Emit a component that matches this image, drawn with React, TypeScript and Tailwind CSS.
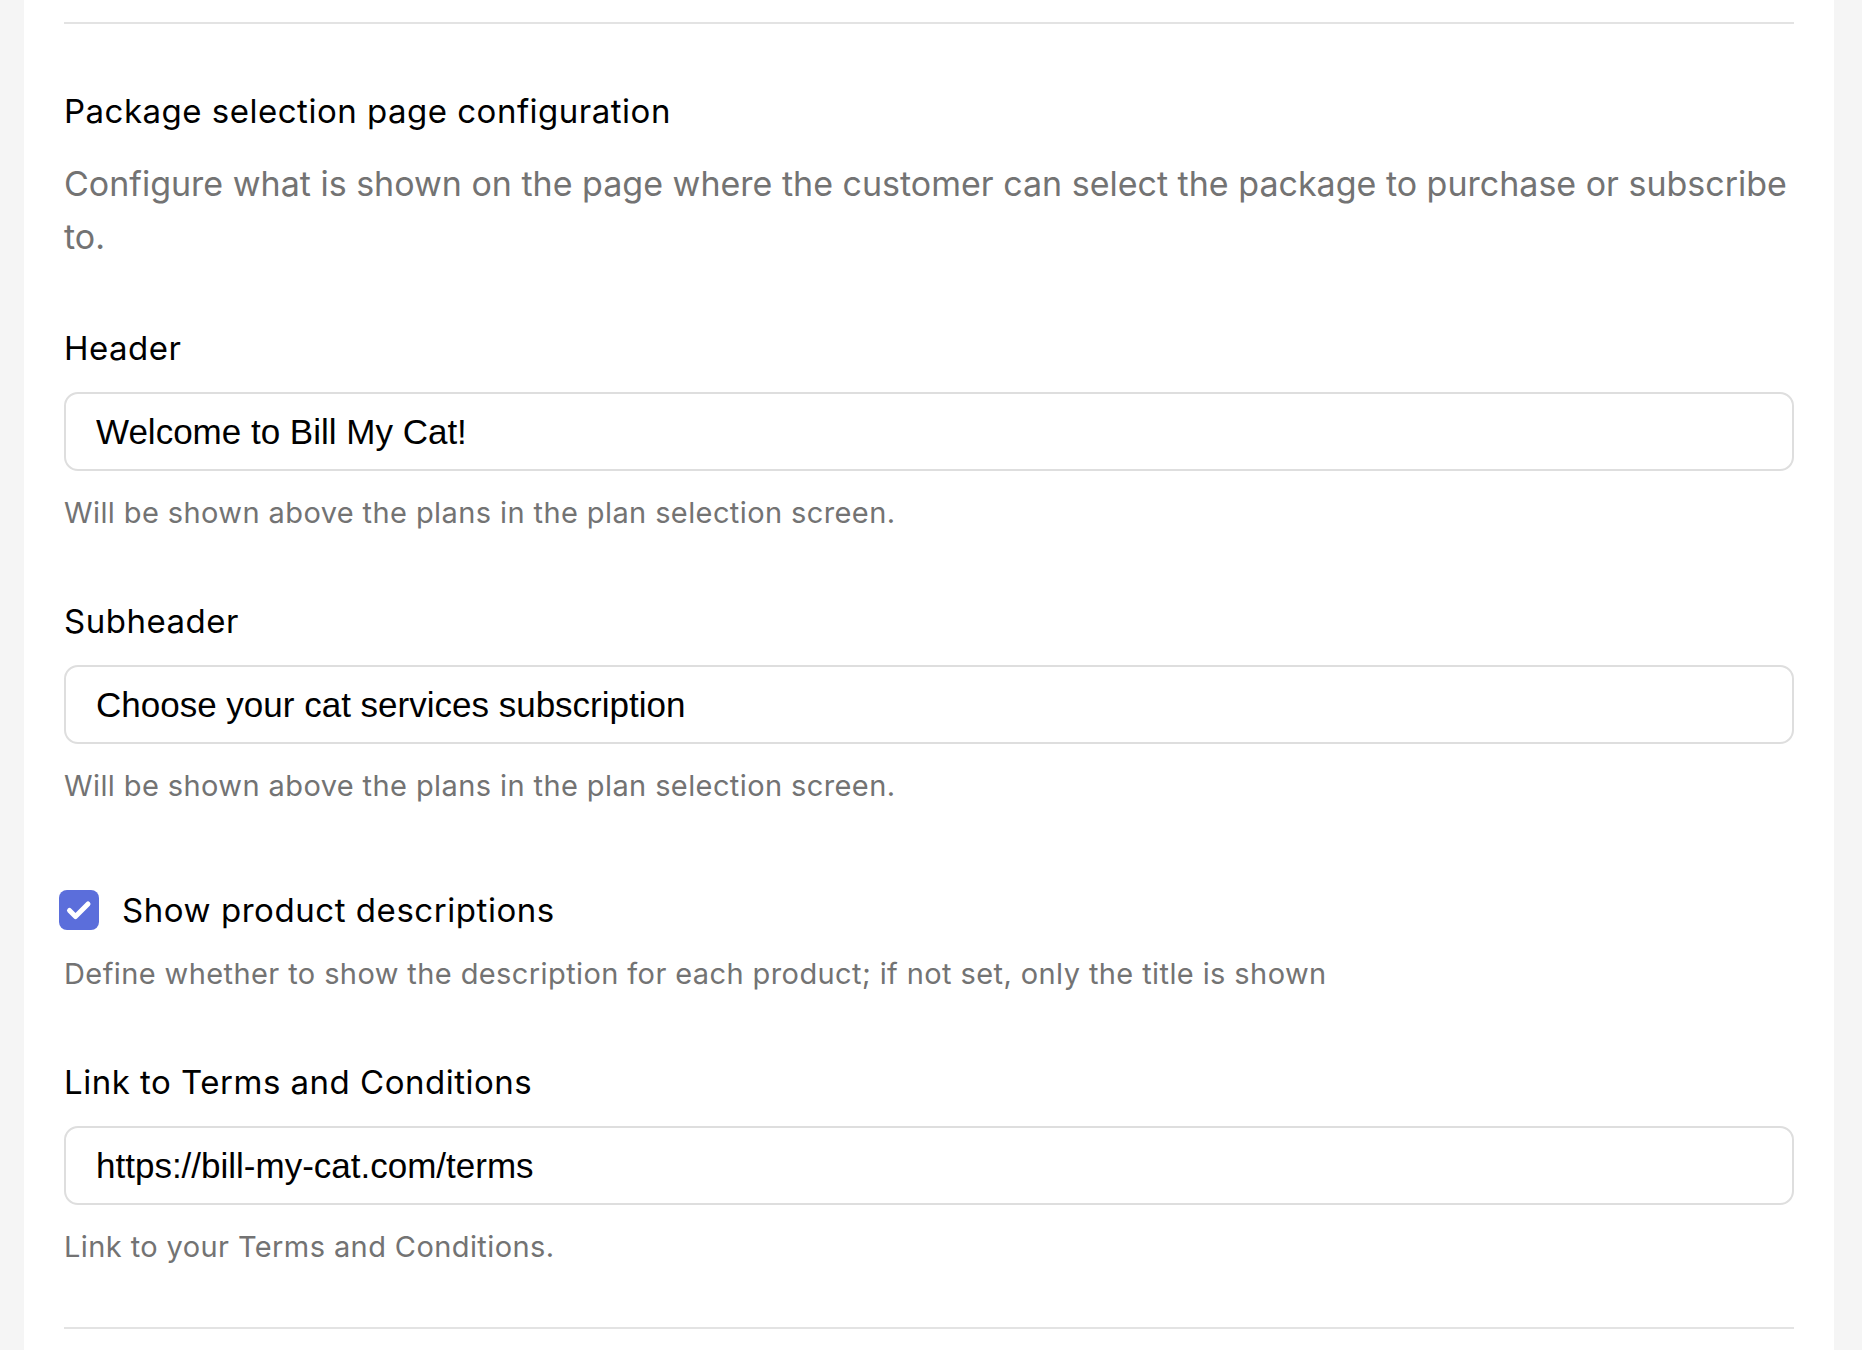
import { useState } from "react";

type FieldProps = {
  label: string;
  value: string;
  help: string;
  first?: boolean;
};

function TextField({ label, value, help, first }: FieldProps) {
  const [text, setText] = useState(value);
  return (
    <div className={first ? "mt-[65px]" : "mt-[70px]"}>
      <label className="block text-[33px] leading-[40px] tracking-[0.5px] text-black">{label}</label>
      <input
        value={text}
        onChange={(event) => setText(event.target.value)}
        className="mt-[24px] block h-[79px] w-full rounded-[14px] border-2 border-[#dedede] bg-white px-[30px] font-['Liberation_Sans',Arial,sans-serif] text-[35px] text-black outline-none"
      />
      <p className="mt-[24px] text-[29px] leading-[36px] tracking-[0.4px] text-[#737373]">{help}</p>
    </div>
  );
}

export default function App() {
  const [showDescriptions, setShowDescriptions] = useState(true);

  return (
    <div className="h-screen overflow-hidden bg-[#f5f5f5] pl-6 pr-7 font-['Inter',sans-serif]">
      <div className="h-full bg-white px-10 pt-[22px]">
        <div className="h-[2px] bg-[#e3e3e3]" />

        <h2 className="mt-[67px] text-[33px] leading-[40px] tracking-[0.5px] text-black">Package selection page configuration</h2>
        <p className="mt-[26px] text-[34px] leading-[53px] text-[#737373]">
          Configure what is shown on the page where the customer can select the package to purchase or subscribe to.
        </p>

        <TextField first label="Header" value="Welcome to Bill My Cat!" help="Will be shown above the plans in the plan selection screen." />
        <TextField label="Subheader" value="Choose your cat services subscription" help="Will be shown above the plans in the plan selection screen." />

        <div className="mt-[86px]">
          <label className="-ml-[5px] flex cursor-pointer items-center gap-[23px]">
            <button
              type="button"
              onClick={() => setShowDescriptions(!showDescriptions)}
              className={showDescriptions ? "flex h-10 w-10 items-center justify-center rounded-[8px] bg-[#5b6edb]" : "flex h-10 w-10 items-center justify-center rounded-[8px] border-2 border-[#cfcfcf] bg-white"}
            >
              {showDescriptions && (
                <svg width="40" height="40" viewBox="0 0 40 40" fill="none">
                  <path d="M10.5 20.5 L16.5 26.5 L29 14" stroke="white" strokeWidth="5" strokeLinecap="round" strokeLinejoin="round" />
                </svg>
              )}
            </button>
            <span className="text-[33px] leading-[40px] tracking-[0.55px] text-black">Show product descriptions</span>
          </label>
          <p className="mt-[26px] text-[29px] leading-[36px] tracking-[0.4px] text-[#737373]">
            Define whether to show the description for each product; if not set, only the title is shown
          </p>
        </div>

        <TextField label="Link to Terms and Conditions" value="https://bill-my-cat.com/terms" help="Link to your Terms and Conditions." />

        <div className="mt-[62px] h-[2px] bg-[#e3e3e3]" />
      </div>
    </div>
  );
}
